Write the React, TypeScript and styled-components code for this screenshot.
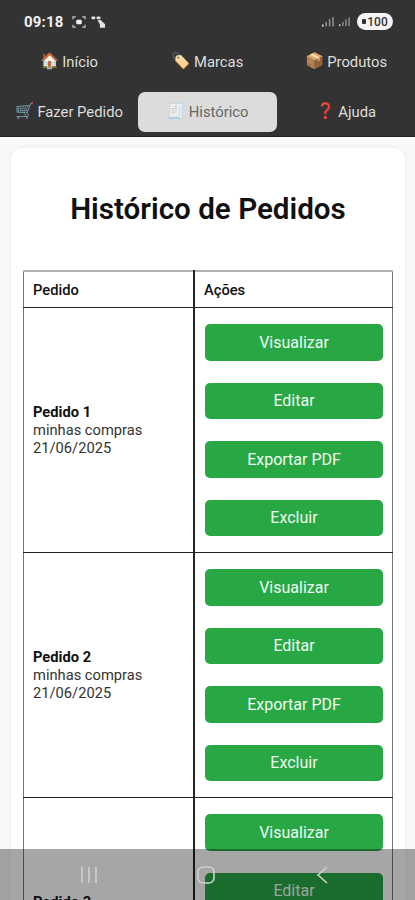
import styled, { createGlobalStyle } from "styled-components"

const GlobalStyle = createGlobalStyle`
  html, body {
    margin: 0;
    padding: 0;
    height: 900px;
    overflow: hidden;
    background: #f8f8f8;
    font-family: Roboto, "Liberation Sans", sans-serif;
  }
`

const Header = styled.header`
  background: #333333;
  height: 137px;
  box-sizing: border-box;
  border-bottom: 1px solid #222;
`

const StatusBar = styled.div`
  height: 40px;
  padding: 3px 22px 0 24px;
  box-sizing: border-box;
  display: flex;
  align-items: center;
  justify-content: space-between;
  color: #fff;
`

const StatusGroup = styled.div<{ $gap: number }>`
  display: flex;
  align-items: center;
  gap: ${p => p.$gap}px;
`

const Clock = styled.span`
  font-size: 15px;
  font-weight: 700;
  letter-spacing: 0.2px;
  margin-right: 3px;
  color: #f2f2f2;
`

const Battery = styled.span`
  display: flex;
  align-items: center;
  justify-content: center;
  gap: 1px;
  width: 36px;
  height: 17px;
  margin-left: 2px;
  border-radius: 9px;
  background: #f4f4f4;
  color: #333;
  font-size: 12px;
  font-weight: 500;
`

const BatteryDot = styled.i`
  width: 4px;
  height: 5px;
  border-radius: 1px;
  background: #333;
`

const NavGrid = styled.nav`
  display: grid;
  grid-template-columns: 138px 139px 138px;
  grid-template-rows: 40px 40px;
  row-gap: 10px;
  padding-top: 2px;
`

const NavItem = styled.a<{ $active?: boolean }>`
  display: flex;
  align-items: center;
  justify-content: center;
  gap: 3px;
  font-size: 14.8px;
  font-weight: 400;
  white-space: nowrap;
  border-radius: 7px;
  color: ${p => (p.$active ? "#666" : "#dedede")};
  background: ${p => (p.$active ? "#dcdcdc" : "transparent")};
`

const NavIcon = styled.span<{ $active?: boolean }>`
  font-size: 15.5px;
  line-height: 1;
  opacity: ${p => (p.$active ? 0.5 : 1)};
  font-family: "Noto Color Emoji", sans-serif;
`

const Card = styled.main`
  margin: 11px 10px 0 11px;
  padding: 0 12px;
  background: #fff;
  border-radius: 12px;
  box-shadow: 0 0 6px rgba(0, 0, 0, 0.05);
`

const Title = styled.h1`
  margin: 0;
  padding: 44px 0 44px;
  text-align: center;
  font-size: 29.6px;
  line-height: 34px;
  font-weight: 600;
  color: #111;
`

const Table = styled.table`
  width: 370px;
  table-layout: fixed;
  border-collapse: collapse;
  color: #111;
  font-size: 14.7px;
  border-top: 2px solid #b0b0b0;
`

const HeadCell = styled.th`
  height: 35px;
  padding: 0 9px;
  text-align: left;
  font-size: 14.7px;
  font-weight: 500;
  border: 1px solid #222;
  border-top: none;
  &:first-child { width: 151px; border-left-color: #777; border-right: 2px solid #222; }
  &:last-child { border-right-color: #777; }
`

const InfoCell = styled.td`
  padding: 0 9px;
  line-height: 18px;
  border: 1px solid #222;
  border-left-color: #777;
  border-right: 2px solid #222;
  color: #333;
`

const OrderName = styled.strong`
  display: block;
  font-weight: 700;
  color: #111;
`

const ActionCell = styled.td`
  height: 245px;
  box-sizing: border-box;
  padding: 16px 9px 16px 10px;
  border: 1px solid #222;
  border-right-color: #777;
  vertical-align: top;
`

const ActionList = styled.div`
  display: flex;
  flex-direction: column;
  gap: 22px;
`

const ActionButton = styled.button`
  height: 36.5px;
  width: 100%;
  border: none;
  border-radius: 5px;
  background: #28a745;
  color: #eefbf0;
  font-family: inherit;
  font-size: 16px;
  font-weight: 400;
`

const SystemBar = styled.div`
  position: fixed;
  left: 0;
  right: 0;
  bottom: 0;
  height: 51px;
  background: rgba(0, 0, 0, 0.35);
  display: grid;
  grid-template-columns: 178px 56px 176px;
  justify-items: center;
  align-items: center;
`

const navItems = [
  { icon: "🏠", label: "Início" },
  { icon: "🏷️", label: "Marcas" },
  { icon: "📦", label: "Produtos" },
  { icon: "🛒", label: "Fazer Pedido" },
  { icon: "🧾", label: "Histórico", active: true },
  { icon: "❓", label: "Ajuda" },
]

const actions = ["Visualizar", "Editar", "Exportar PDF", "Excluir"]

const Signal = ({ width }: { width: number }) => (
  <svg width={width} height="11" viewBox="0 0 12 11" fill="#8c8c8c">
    <rect x="0" y="8.5" width="1.6" height="2" fill="#ddd" />
    <rect x="3.4" y="6" width="1.6" height="4.5" />
    <rect x="6.8" y="3" width="1.6" height="7.5" />
    <rect x="10.2" y="1" width="1.6" height="9.5" />
  </svg>
)

export default function App() {
  return (
    <>
      <GlobalStyle />
      <Header>
        <StatusBar>
          <StatusGroup $gap={5}>
            <Clock>09:18</Clock>
            <svg width="14" height="14" viewBox="0 0 15 14" fill="none" stroke="#ccc" strokeWidth="1.2">
              <path d="M1 4V1.5H4M11 1.5H14V4M14 10V12.5H11M4 12.5H1V10" />
              <rect x="4.5" y="4.5" width="6" height="5" rx="1.5" fill="#eee" stroke="none" />
            </svg>
            <svg width="15" height="14" viewBox="0 0 16 14" fill="#e4e4e4">
              <rect x="0.5" y="1" width="4" height="3" rx="1" />
              <rect x="6" y="1" width="4" height="3" rx="1" />
              <path d="M7 5.5L10 4.5L15 9.5V13H9.5V9.5Z" />
            </svg>
          </StatusGroup>
          <StatusGroup $gap={5}>
            <Signal width={12} />
            <Signal width={11} />
            <Battery>
              <BatteryDot />
              100
            </Battery>
          </StatusGroup>
        </StatusBar>
        <NavGrid>
          {navItems.map(item => (
            <NavItem key={item.label} $active={item.active}>
              <NavIcon $active={item.active}>{item.icon}</NavIcon>
              {item.label}
            </NavItem>
          ))}
        </NavGrid>
      </Header>

      <Card>
        <Title>Histórico de Pedidos</Title>
        <Table>
          <thead>
            <tr>
              <HeadCell>Pedido</HeadCell>
              <HeadCell>Ações</HeadCell>
            </tr>
          </thead>
          <tbody>
            {[1, 2, 3].map(n => (
              <tr key={n}>
                <InfoCell>
                  <OrderName>Pedido {n}</OrderName>
                  minhas compras
                  <br />
                  21/06/2025
                </InfoCell>
                <ActionCell>
                  <ActionList>
                    {actions.map(a => (
                      <ActionButton key={a}>{a}</ActionButton>
                    ))}
                  </ActionList>
                </ActionCell>
              </tr>
            ))}
          </tbody>
        </Table>
      </Card>

      <SystemBar>
        <svg width="18" height="16" viewBox="0 0 18 16" stroke="#d0d0d0" strokeWidth="1.6">
          <path d="M2 0V16M9 0V16M16 0V16" />
        </svg>
        <svg width="18" height="18" viewBox="0 0 18 18" fill="none" stroke="#d0d0d0" strokeWidth="1.6">
          <rect x="1" y="1" width="16" height="16" rx="5" />
        </svg>
        <svg width="12" height="18" viewBox="0 0 12 18" fill="none" stroke="#d0d0d0" strokeWidth="1.6">
          <path d="M11 1L2 9L11 17" />
        </svg>
      </SystemBar>
    </>
  )
}
